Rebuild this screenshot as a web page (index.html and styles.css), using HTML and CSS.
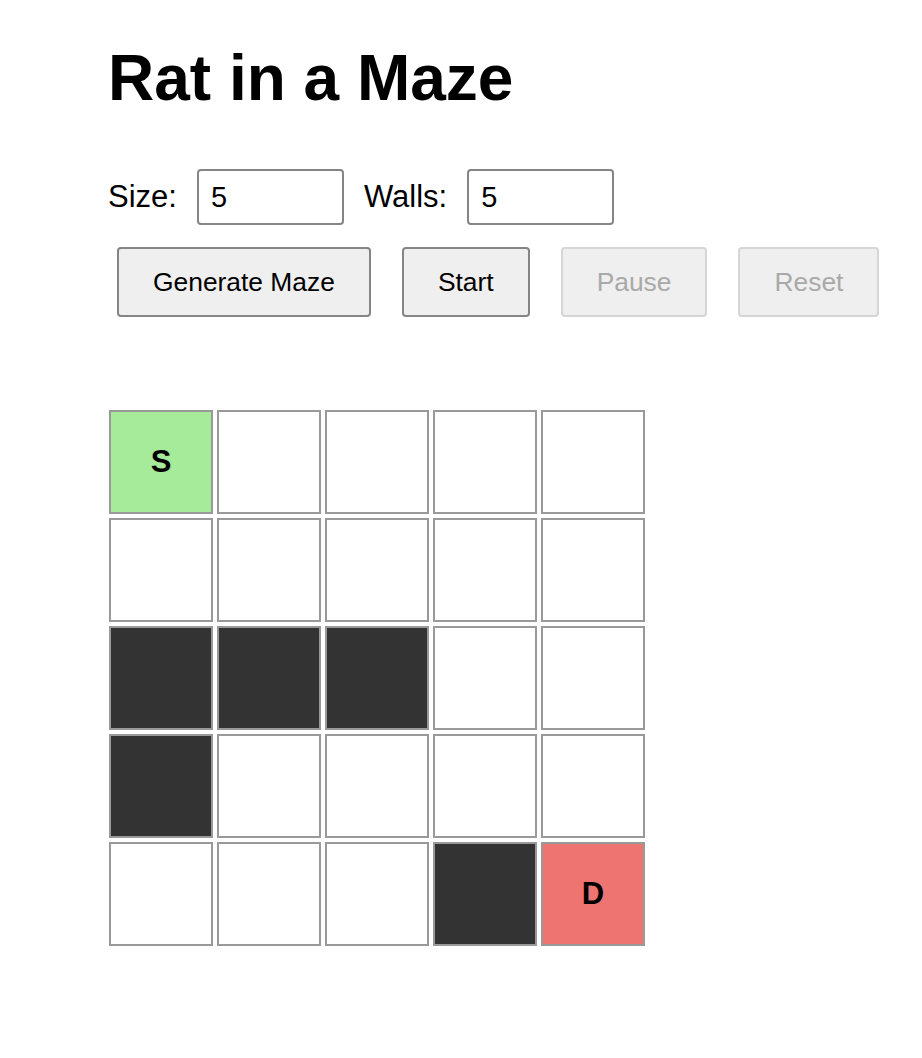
FILE: index.html
```html
<!DOCTYPE html>
<html>
<head>
<meta charset="utf-8">
<title>Rat in a Maze</title>
<link rel="stylesheet" href="styles.css">
</head>
<body>
<div class="page">
  <h1 class="title">Rat in a Maze</h1>
  <div class="controls">
    <label class="field-label" for="size">Size:</label>
    <input class="num-input" id="size" type="text" value="5">
    <label class="field-label" for="walls">Walls:</label>
    <input class="num-input" id="walls" type="text" value="5">
  </div>
  <div class="actions">
    <button class="btn">Generate Maze</button>
    <button class="btn">Start</button>
    <button class="btn" disabled>Pause</button>
    <button class="btn" disabled>Reset</button>
  </div>
  <div class="maze">
    <div class="cell start">S</div>
    <div class="cell"></div>
    <div class="cell"></div>
    <div class="cell"></div>
    <div class="cell"></div>

    <div class="cell"></div>
    <div class="cell"></div>
    <div class="cell"></div>
    <div class="cell"></div>
    <div class="cell"></div>

    <div class="cell wall"></div>
    <div class="cell wall"></div>
    <div class="cell wall"></div>
    <div class="cell"></div>
    <div class="cell"></div>

    <div class="cell wall"></div>
    <div class="cell"></div>
    <div class="cell"></div>
    <div class="cell"></div>
    <div class="cell"></div>

    <div class="cell"></div>
    <div class="cell"></div>
    <div class="cell"></div>
    <div class="cell wall"></div>
    <div class="cell dest">D</div>
  </div>
</div>
</body>
</html>
```

FILE: styles.css
```css
html, body {
  margin: 0;
  padding: 0;
  background: #ffffff;
}

body {
  font-family: "Liberation Sans", Arial, sans-serif;
  color: #000000;
}

.page {
  padding: 42px 0 0 108px;
}

.title {
  margin: 0;
  font-size: 64px;
  font-weight: bold;
  line-height: 72px;
}

.controls {
  display: flex;
  align-items: center;
  margin-top: 55px;
  height: 56px;
}

.field-label {
  font-size: 31px;
  margin-right: 20px;
}

.num-input {
  box-sizing: border-box;
  width: 147px;
  height: 56px;
  border: 2px solid #858585;
  border-radius: 4px;
  padding: 0 12px;
  font-family: "Liberation Sans", Arial, sans-serif;
  font-size: 29px;
  color: #000000;
  background: #ffffff;
  margin-right: 20px;
}

.actions {
  display: flex;
  gap: 31px;
  margin-top: 22px;
  margin-left: 9px;
}

.btn {
  box-sizing: border-box;
  height: 70px;
  padding: 0 34px;
  border: 2px solid #858585;
  border-radius: 4px;
  background: #efefef;
  font-family: "Liberation Sans", Arial, sans-serif;
  font-size: 26.4px;
  color: #000000;
}

.btn:disabled {
  border-color: #d6d6d6;
  color: #a9a9a9;
  background: #efefef;
}

.maze {
  display: grid;
  grid-template-columns: repeat(5, 104px);
  grid-auto-rows: 104px;
  gap: 4px;
  margin-top: 93px;
  margin-left: 1px;
}

.cell {
  box-sizing: border-box;
  border: 2px solid #999999;
  background: #ffffff;
  display: flex;
  align-items: center;
  justify-content: center;
  font-size: 31px;
  font-weight: bold;
}

.cell.wall {
  background: #333333;
}

.cell.start {
  background: #a6eb99;
}

.cell.dest {
  background: #ed7470;
}
```
